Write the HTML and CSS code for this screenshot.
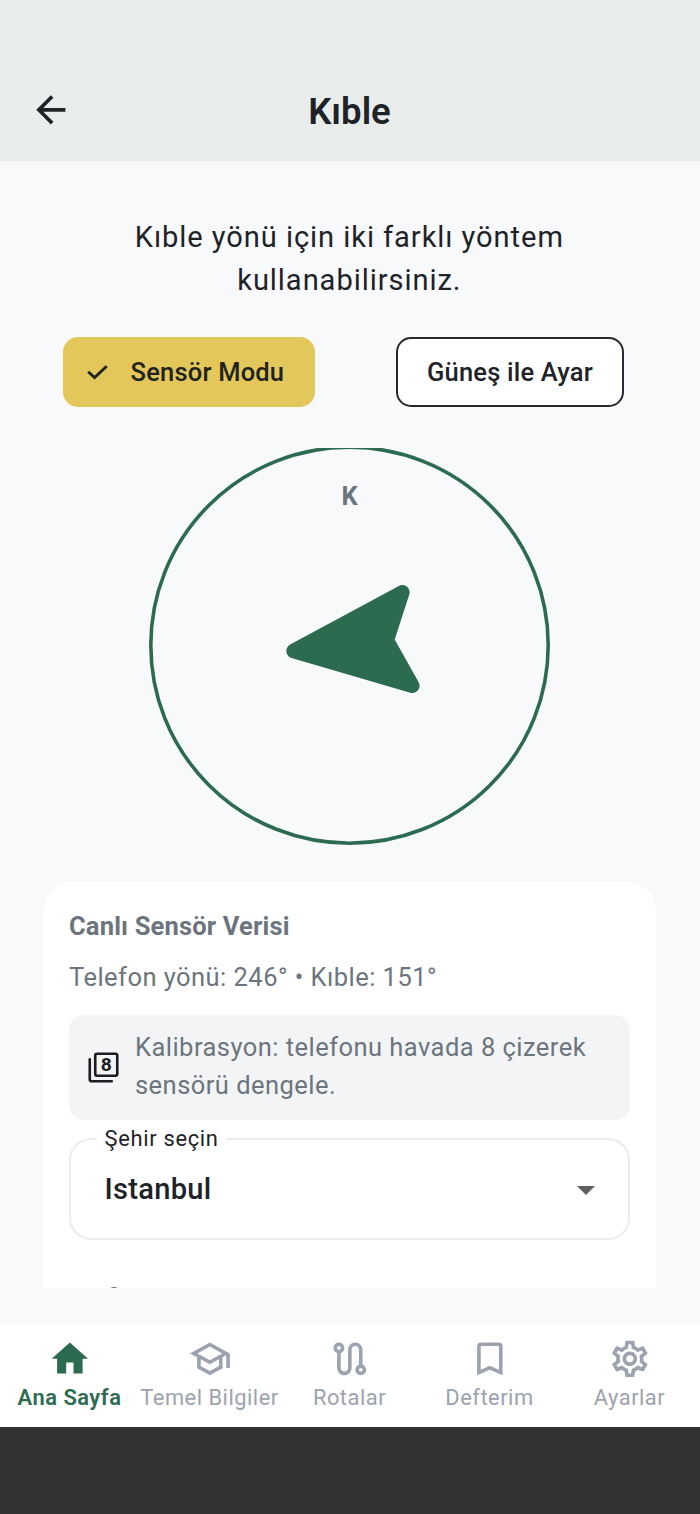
FILE: index.html
```html
<!DOCTYPE html>
<html lang="tr">
<head>
<meta charset="utf-8">
<title>Kıble</title>
<link rel="stylesheet" href="styles.css">
</head>
<body>
<div class="app">
  <header class="topbar">
    <svg class="back" viewBox="0 0 24 24"><path d="M20 11H7.83l5.59-5.59L12 4l-8 8 8 8 1.41-1.41L7.83 13H20v-2z"/></svg>
    <h1 class="title">Kıble</h1>
  </header>
  <main class="content">
    <p class="intro">Kıble yönü için iki farklı yöntem<br>kullanabilirsiniz.</p>
    <div class="modes">
      <button class="mode mode-active"><svg class="check" viewBox="0 0 24 16"><path d="M2.2 7.8l6.4 5.8L20.7 2.2"/></svg><span class="sensor-label">Sensör Modu</span></button>
      <button class="mode mode-outline"><span class="sun-label">Güneş ile Ayar</span></button>
    </div>
    <div class="scroll">
      <svg class="compass" viewBox="0 0 401 398">
        <ellipse class="ring" cx="200.5" cy="197.2" rx="198.7" ry="198"/>
        <path class="needle" d="M144.6 203L253.3 144.3L237.8 192.3L263.3 237.7Z"/>
        <text class="north" x="200.5" y="57">K</text>
      </svg>
      <section class="card">
        <h2 class="card-title">Canlı Sensör Verisi</h2>
        <p class="reading">Telefon yönü: 246° • Kıble: 151°</p>
        <div class="hint">
          <svg class="hint-icon" viewBox="0 0 24 24"><path d="M2 6v14.5c0 .8.7 1.5 1.5 1.5H18"/><rect x="6" y="2" width="16" height="16" rx="1.2"/><text x="14" y="14.7">8</text></svg>
          <p class="hint-text">Kalibrasyon: telefonu havada 8 çizerek<br>sensörü dengele.</p>
        </div>
        <fieldset class="city">
          <legend class="city-label">Şehir seçin</legend>
          <div class="city-row">
            <span class="city-value">Istanbul</span>
            <svg class="caret" viewBox="0 0 18 9"><path d="M0 0h18L9 9z"/></svg>
          </div>
        </fieldset>
        <div class="next-item"></div>
      </section>
    </div>
  </main>
  <nav class="tabs">
    <a class="tab tab-active"><svg viewBox="0 0 24 24"><path d="M10 20v-6h4v6h5v-8h3L12 3 2 12h3v8z"/></svg><span>Ana Sayfa</span></a>
    <a class="tab"><svg viewBox="0 0 24 24"><path d="M12 3L1 9l4 2.18v6L12 21l7-3.82v-6l2-1.09V17h2V9L12 3zm6.82 6L12 12.72 5.18 9 12 5.28 18.82 9zM17 15.99l-5 2.73-5-2.73v-3.72L12 15l5-2.73v3.72z"/></svg><span>Temel Bilgiler</span></a>
    <a class="tab"><svg viewBox="0 0 24 24"><path d="M19 15.18V7c0-2.21-1.79-4-4-4s-4 1.79-4 4v10c0 1.1-.9 2-2 2s-2-.9-2-2V8.82C8.16 8.4 9 7.3 9 6c0-1.66-1.34-3-3-3S3 4.34 3 6c0 1.3.84 2.4 2 2.82V17c0 2.21 1.79 4 4 4s4-1.79 4-4V7c0-1.1.9-2 2-2s2 .9 2 2v8.18c-1.16.41-2 1.51-2 2.82 0 1.66 1.34 3 3 3s3-1.34 3-3c0-1.3-.84-2.4-2-2.82zM6 7c-.55 0-1-.45-1-1s.45-1 1-1 1 .45 1 1-.45 1-1 1zM18 19c-.55 0-1-.45-1-1s.45-1 1-1 1 .45 1 1-.45 1-1 1z" fill-rule="evenodd"/></svg><span>Rotalar</span></a>
    <a class="tab"><svg viewBox="0 0 24 24"><path d="M17 3H7c-1.1 0-1.99.9-1.99 2L5 21l7-3 7 3V5c0-1.1-.9-2-2-2zm0 15l-5-2.18L7 18V5h10v13z"/></svg><span>Defterim</span></a>
    <a class="tab"><svg viewBox="0 0 24 24"><path d="M19.43 12.98c.04-.32.07-.64.07-.98 0-.34-.03-.66-.07-.98l2.11-1.65c.19-.15.24-.42.12-.64l-2-3.46c-.09-.16-.26-.25-.44-.25-.06 0-.12.01-.17.03l-2.49 1c-.52-.4-1.08-.73-1.69-.98l-.38-2.65C14.46 2.18 14.25 2 14 2h-4c-.25 0-.46.18-.49.42l-.38 2.65c-.61.25-1.17.59-1.69.98l-2.49-1c-.06-.02-.12-.03-.18-.03-.17 0-.34.09-.43.25l-2 3.46c-.13.22-.07.49.12.64l2.11 1.65c-.04.32-.07.65-.07.98 0 .33.03.66.07.98l-2.11 1.65c-.19.15-.24.42-.12.64l2 3.46c.09.16.26.25.44.25.06 0 .12-.01.17-.03l2.49-1c.52.4 1.08.73 1.69.98l.38 2.65c.03.24.24.42.49.42h4c.25 0 .46-.18.49-.42l.38-2.65c.61-.25 1.17-.59 1.69-.98l2.49 1c.06.02.12.03.18.03.17 0 .34-.09.43-.25l2-3.46c.12-.22.07-.49-.12-.64l-2.11-1.65zm-1.98-1.71c.04.31.05.52.05.73 0 .21-.02.43-.05.73l-.14 1.13.89.7 1.08.84-.7 1.21-1.27-.51-1.04-.42-.9.68c-.43.32-.84.56-1.25.73l-1.06.43-.16 1.13-.2 1.35h-1.4l-.19-1.35-.16-1.13-1.06-.43c-.43-.18-.83-.41-1.23-.71l-.91-.7-1.06.43-1.27.51-.7-1.21 1.08-.84.89-.7-.14-1.13c-.03-.31-.05-.54-.05-.74s.02-.43.05-.73l.14-1.13-.89-.7-1.08-.84.7-1.21 1.27.51 1.04.42.9-.68c.43-.32.84-.56 1.25-.73l1.06-.43.16-1.13.2-1.35h1.39l.19 1.35.16 1.13 1.06.43c.43.18.83.41 1.23.71l.91.7 1.06-.43 1.27-.51.7 1.21-1.07.85-.89.7.14 1.13zM12 8c-2.21 0-4 1.79-4 4s1.79 4 4 4 4-1.79 4-4-1.79-4-4-4zm0 6c-1.1 0-2-.9-2-2s.9-2 2-2 2 .9 2 2-.9 2-2 2z"/></svg><span>Ayarlar</span></a>
  </nav>
  <div class="system-bar"></div>
</div>
</body>
</html>
```
FILE: styles.css
```css
* { box-sizing: border-box; }
body, h1, h2, p { margin: 0; }
body { font-family: Roboto, "Noto Sans", sans-serif; color: #1f2328; }
.app { display: flex; flex-direction: column; width: 700px; height: 1514px; background: #f8f9fb; overflow: hidden; }

.topbar { display: grid; grid-template-columns: 100px 1fr 101px; align-items: center; height: 161px; padding-top: 60px; background: #e8ecea; flex: none; }
.back { width: 43.7px; height: 43.7px; margin: 0 0 1px 28.5px; fill: #1f2328; }
.title { padding-top: 2px; text-align: center; font-size: 36.5px; line-height: 44px; font-weight: 600; }

.content { height: 1163.5px; flex: none; }
.intro { padding: 54.6px 1.4px 0 0; text-align: center; font-size: 29.1px; line-height: 43.4px; letter-spacing: 0.93px; }
.modes { display: flex; justify-content: space-between; padding: 35px 76px 0 62.5px; height: 145px; margin-bottom: 1px; }
.mode { display: flex; align-items: center; height: 69.5px; padding: 0; border: 0; border-radius: 15px; font: 500 25.5px/30px Roboto, "Noto Sans", sans-serif; letter-spacing: 0.2px; color: #1f2328; white-space: nowrap; }
.mode-active { width: 252.5px; padding-left: 23px; gap: 21px; background: #e3c75b; color: #20231f; }
.mode-outline { width: 228px; justify-content: center; border: 2px solid #25282d; background: #fff; }
.check { width: 24px; height: 16px; fill: none; stroke: #20231f; stroke-width: 2.9; }

.scroll { height: 839.6px; overflow: hidden; }
.compass { display: block; width: 401px; height: 398px; margin-left: 149px; }
.ring { fill: none; stroke: #2c6b4f; stroke-width: 3.6; }
.needle { fill: #2c6b4f; stroke: #2c6b4f; stroke-width: 14.6; stroke-linejoin: round; }
.north { font: 700 25.5px Roboto, sans-serif; fill: #6c757d; text-anchor: middle; }

.card { width: 613px; height: 500px; margin: 35.6px 0 0 43px; padding: 25.6px 26px 0; border-radius: 29px 29px 0 0; background: #fff; color: #6c757d; }
.card-title { font-size: 25.5px; line-height: 36px; font-weight: 700; letter-spacing: 0.17px; }
.reading { margin-top: 15px; font-size: 25.5px; line-height: 36px; letter-spacing: 0.46px; }
.hint { display: flex; align-items: center; gap: 15px; height: 105px; margin-top: 20.4px; padding-left: 18px; border-radius: 15px; background: #f3f4f6; }
.hint-icon { width: 33px; height: 33px; fill: none; stroke: #1c1d20; stroke-width: 1.9; stroke-linecap: round; }
.hint-icon text { font: 700 14px Roboto, sans-serif; fill: #1c1d20; stroke: none; text-anchor: middle; }
.hint-text { padding-bottom: 2px; font-size: 25.5px; line-height: 38.3px; letter-spacing: 0.46px; }
.city { height: 114px; margin: 6px 0 0; padding: 0 33px 0 33.5px; border: 2px solid #ececee; border-radius: 22px; color: #1f2328; min-width: 0; }
.city-label { margin-left: -8px; padding: 0 8px; font-size: 21.9px; line-height: 26px; letter-spacing: 0.68px; }
.city-row { display: flex; align-items: center; justify-content: space-between; padding-top: 19px; }
.city-value { font-size: 29.1px; line-height: 36px; font-weight: 500; letter-spacing: 0.27px; }
.caret { width: 18px; height: 9px; margin-top: 3px; fill: #5f5f61; }
.next-item { width: 14px; height: 14px; margin: 47px 0 0 38px; border: 2px solid #66716f; border-radius: 50%; }

.tabs { display: grid; grid-template-columns: repeat(5, 140px); width: 700px; height: 102px; flex: none; background: #fff; }
.tab { display: flex; flex-direction: column; align-items: center; padding-top: 12.7px; margin-left: -1px; color: #9ca3af; font-size: 21.9px; line-height: 33px; letter-spacing: 0.5px; white-space: nowrap; }
.tab svg { width: 43.7px; height: 43.7px; fill: currentColor; }
.tab-active { color: #2c6b4f; font-weight: 600; }
.system-bar { flex: 1; background: #333; }
```
